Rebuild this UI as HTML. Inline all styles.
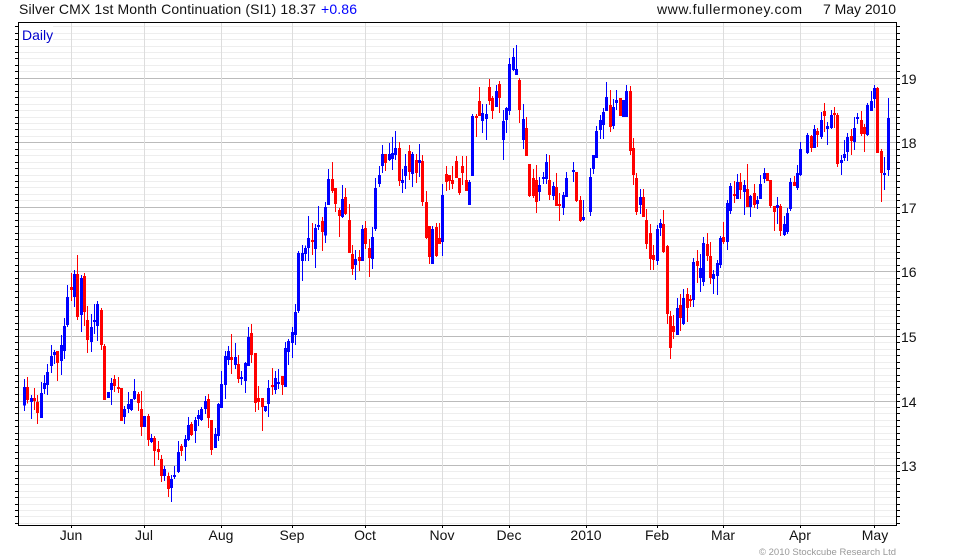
<!DOCTYPE html>
<html>
<head>
<meta charset="utf-8">
<title>Silver CMX</title>
<style>
html,body{margin:0;padding:0;background:#fff;width:980px;height:560px;overflow:hidden}
svg{display:block}
text{font-family:"Liberation Sans",Arial,sans-serif;font-size:14px;fill:#111}
.m{text-anchor:middle}
</style>
</head>
<body>
<svg width="980" height="560" viewBox="0 0 980 560" xmlns="http://www.w3.org/2000/svg">
<defs>
<path id="m" d="M0 26.5H1M0 33.5H1M0 39.5H1M0 46.5H1M0 52.5H1M0 58.5H1M0 65.5H1M0 71.5H1M0 78.5H1M0 84.5H1M0 91.5H1M0 97.5H1M0 104.5H1M0 110.5H1M0 117.5H1M0 123.5H1M0 129.5H1M0 136.5H1M0 142.5H1M0 149.5H1M0 155.5H1M0 162.5H1M0 168.5H1M0 175.5H1M0 181.5H1M0 187.5H1M0 194.5H1M0 200.5H1M0 207.5H1M0 213.5H1M0 220.5H1M0 226.5H1M0 233.5H1M0 239.5H1M0 246.5H1M0 252.5H1M0 258.5H1M0 265.5H1M0 271.5H1M0 278.5H1M0 284.5H1M0 291.5H1M0 297.5H1M0 304.5H1M0 310.5H1M0 316.5H1M0 323.5H1M0 329.5H1M0 336.5H1M0 342.5H1M0 349.5H1M0 355.5H1M0 362.5H1M0 368.5H1M0 375.5H1M0 381.5H1M0 387.5H1M0 394.5H1M0 401.5H1M0 407.5H1M0 413.5H1M0 420.5H1M0 426.5H1M0 433.5H1M0 439.5H1M0 445.5H1M0 452.5H1M0 458.5H1M0 465.5H1M0 471.5H1M0 478.5H1M0 484.5H1M0 491.5H1M0 497.5H1M0 504.5H1M0 510.5H1M0 516.5H1M0 523.5H1"/>
</defs>
<g shape-rendering="crispEdges" fill="none">
<use href="#m" transform="translate(19 0) scale(877 1)" stroke="#eeeeee" stroke-width="1"/>
<path stroke="#bbbbbb" d="M19 78.5H896M19 142.5H896M19 207.5H896M19 271.5H896M19 336.5H896M19 401.5H896M19 465.5H896"/>
<path stroke="#dddddd" d="M71.5 23V525M144.5 23V525M221.5 23V525M292.5 23V525M365.5 23V525M442.5 23V525M509.5 23V525M586.5 23V525M657.5 23V525M723.5 23V525M800.5 23V525M874.5 23V525"/>
<rect x="19" y="23" width="34" height="20" fill="#fff"/>

<g transform="translate(0 240) scale(.33333)">
<path stroke="#0000ff" stroke-width="3.02" d="M73 417V513M94 465V537M124 426V534M133 405V462M142 372V465M154 315V399M163 330V372M184 285V405M193 234V357M202 135V261M223 90V201M244 105V276M274 222V336M283 192V282M292 183V303M325 456V474M334 414V495M373 498V552M385 456V519M394 477V513M403 417V480M433 528V561M454 582V609M493 678V723M514 705V786M523 678V717M535 603V699M556 585V663M565 531V603M586 531V609M595 510V558M604 501V543M616 468V522M646 564V624M655 489V603M664 393V504M676 333V477M685 318V375M706 309V387M724 393V435M736 366V459M745 261V378M796 498V516M805 420V531M826 393V462M835 387V447M856 306V441M865 297V375M877 261V354M886 192V315M895 33V219M907 15V123M916 17V63M925 -72V63M946 -48V84M955 -102V-30"/>
<path stroke="#ff0000" stroke-width="3.02" d="M82 411V490M103 444V510M112 465V552M172 333V423M214 99V183M232 45V240M253 99V258M262 198V339M304 204V330M313 312V480M343 405V456M355 411V459M364 444V543M415 456V513M424 453V588M445 522V618M463 588V678M475 603V660M484 645V726M505 697V771M544 612V648M574 546V588M625 462V564M634 540V645M694 282V402M715 345V429M754 252V369M766 339V516M775 438V510M787 474V573M817 384V465M847 408V465M937 -51V45M967 -69V33"/>
<path stroke="#0000ff" stroke-width="9" d="M73 441V497M94 474V486M124 459V534M133 429V447M142 396V435M154 348V378M163 336V345M184 315V363M193 258V333M202 171V255M223 102V171M244 114V225M274 261V306M283 240V246M292 192V258M325 456V474M334 429V450M373 507V531M385 492V507M394 477V510M403 453V477M433 528V561M454 594V606M493 687V708M514 717V744M523 705V711M535 636V696M556 597V621M565 555V600M586 540V573M595 525V537M604 507V540M616 483V507M646 582V624M655 492V588M664 432V504M676 348V435M685 333V360M706 351V375M724 411V417M736 369V423M745 291V378M796 498V513M805 444V492M826 414V450M835 426V432M856 324V441M865 303V336M877 276V309M886 216V285M895 39V213M907 39V63M916 24V42M925 -6V24M946 -36V27M955 -45V-39"/>
<path stroke="#ff0000" stroke-width="9" d="M82 441V480M103 474V483M112 486V519M172 333V369M214 141V150M232 102V231M253 108V216M262 240V300M304 210V315M313 318V480M343 417V438M355 441V447M364 444V543M415 462V489M424 507V561M445 528V600M463 594V633M475 627V636M484 657V708M505 708V747M544 618V633M574 552V585M625 477V534M634 540V630M694 351V360M715 372V417M754 279V345M766 339V489M775 474V486M787 474V501M817 435V441M847 408V435M937 0V6M967 -57V-24"/>
</g>

<g transform="translate(320 30) scale(.33333)">
<path stroke="#0000ff" stroke-width="3.02" d="M16 516V639M25 417V525M67 465V564M106 660V750M127 585V693M157 591V717M166 444V603M178 408V471M187 345V429M208 339V393M217 321V420M226 303V390M247 417V489M256 372V477M277 366V471M298 342V441M337 588V702M367 462V678M448 450V525M457 252V438M487 222V309M499 222V330M529 165V231M550 240V390M559 231V309M568 84V255M580 54V123M589 45V135M610 222V357M658 441V513M670 426V462M679 372V462M700 456V510M730 486V555M739 426V501M760 396V456M790 510V573M811 414V558M820 375V432M829 288V384M841 255V327M850 234V327M859 156V243M880 207V297M889 180V240M910 210V261M919 165V261M961 477V552M1012 585V705"/>
<path stroke="#ff0000" stroke-width="3.02" d="M37 396V489M46 474V546M58 534V621M76 474V555M88 522V669M97 645V735M118 660V723M136 573V657M148 627V741M196 372V423M238 336V468M268 345V450M289 372V459M307 375V528M319 483V627M328 588V702M349 579V681M358 579V642M379 408V483M388 435V480M397 408V477M409 378V444M418 444V495M427 378V465M439 378V483M469 252V321M478 171V258M508 147V225M517 198V267M538 153V249M598 144V279M619 261V378M628 402V501M640 417V504M649 405V549M688 375V510M709 429V528M718 489V573M769 426V516M781 498V576M871 180V306M901 204V258M931 168V375M940 324V465M949 429V555M970 477V561M979 537V657M991 582V720M1000 645V720"/>
<path stroke="#0000ff" stroke-width="9" d="M16 531V617M25 447V525M67 507V561M106 687V705M127 597V693M157 621V687M166 474V597M178 435V462M187 372V408M208 372V390M217 369V387M226 354V375M247 450V459M256 408V438M277 372V432M298 390V399M337 597V702M367 495V636M448 456V525M457 258V438M487 249V273M499 252V267M529 183V231M550 273V330M559 234V270M568 102V243M580 81V120M589 117V135M610 267V330M658 465V486M670 441V447M679 396V447M700 468V498M730 495V534M739 444V501M760 420V426M790 561V570M811 441V546M820 375V417M829 303V384M841 270V300M850 246V285M859 201V243M880 231V288M889 210V219M910 210V261M919 183V261M961 501V525M1012 597V693"/>
<path stroke="#ff0000" stroke-width="9" d="M37 447V483M46 474V522M58 540V558M76 501V552M88 570V669M97 672V717M118 681V693M136 594V642M148 654V684M196 372V399M238 354V453M268 363V426M289 390V429M307 393V516M319 516V624M328 588V681M349 591V678M358 624V642M379 432V456M388 435V453M397 450V462M409 393V444M418 444V489M427 408V429M439 450V483M469 258V264M478 213V258M508 171V213M517 204V243M538 162V204M598 150V240M619 294V378M628 402V498M640 444V498M649 450V516M688 450V495M709 471V528M718 522V528M769 426V513M781 510V573M871 225V291M901 204V258M931 183V363M940 354V435M949 444V546M970 501V561M979 570V642M991 609V687M1000 675V690"/>
</g>

<g transform="translate(620 70) scale(.33333)">
<path stroke="#0000ff" stroke-width="3.02" d="M121 447V498M172 684V795M190 657V765M220 564V711M241 552V666M250 501V648M280 600V672M292 570V675M301 498V594M322 390V540M331 339V432M352 312V387M373 330V435M391 375V441M412 378V417M421 315V387M433 294V339M472 381V462M493 438V498M502 414V492M511 324V423M532 285V360M541 216V318M563 189V252M583 165V234M604 126V207M622 156V225M634 120V177M664 255V315M673 210V273M682 189V273M703 141V240M712 129V162M742 99V198M754 63V123M763 45V114M793 261V360M805 84V318"/>
<path stroke="#ff0000" stroke-width="3.02" d="M130 420V549M142 525V762M151 723V867M160 735V807M181 672V783M202 654V756M211 675V711M232 540V639M262 489V573M271 516V642M310 456V522M343 333V399M361 309V387M382 282V411M403 342V414M442 309V333M451 330V414M463 408V483M481 402V498M523 318V348M574 195V246M592 174V231M613 99V186M643 111V174M652 129V291M694 177V255M724 123V198M733 162V246M772 51V249M784 237V396"/>
<path stroke="#0000ff" stroke-width="9" d="M121 459V474M172 714V795M190 684V762M220 576V690M241 594V624M250 519V636M280 612V627M292 579V618M301 504V585M322 399V516M331 348V423M352 336V387M373 345V366M391 378V411M412 390V402M421 342V387M433 309V327M472 405V414M493 462V495M502 429V486M511 336V417M532 309V354M541 237V315M563 195V249M583 177V234M604 150V201M622 168V177M634 135V174M664 270V279M673 252V264M682 201V246M703 174V216M712 141V147M742 105V195M754 93V123M763 54V87M793 309V315M805 144V300"/>
<path stroke="#ff0000" stroke-width="9" d="M130 462V546M142 528V732M151 738V834M160 768V786M181 705V744M202 672V714M211 687V693M232 573V588M262 522V558M271 558V624M310 501V516M343 372V378M361 336V360M382 357V411M403 369V405M442 309V333M451 330V408M463 408V426M481 408V483M523 336V348M574 198V234M592 183V195M613 123V138M643 129V135M652 135V282M694 198V213M724 150V192M733 171V192M772 54V249M784 243V309"/>
</g>

<use href="#m" transform="translate(15 0) scale(3 1)" stroke="#000" stroke-width="1"/>
<use href="#m" transform="translate(897 0) scale(3 1)" stroke="#000" stroke-width="1"/>
<path stroke="#000" d="M71.5 525V528M144.5 525V528M221.5 525V528M292.5 525V528M365.5 525V528M442.5 525V528M509.5 525V528M586.5 525V528M657.5 525V528M723.5 525V528M800.5 525V528M874.5 525V528"/>
<rect x="18.5" y="22.5" width="878" height="503" stroke="#000" stroke-width="1"/>
</g>

<text x="19" y="14" textLength="297" lengthAdjust="spacing">Silver CMX 1st Month Continuation (SI1) 18.37</text>
<text x="321" y="14" textLength="36" lengthAdjust="spacing" style="fill:#0000ff">+0.86</text>
<text x="657" y="14" textLength="145" lengthAdjust="spacing">www.fullermoney.com</text>
<text x="823" y="14" textLength="73" lengthAdjust="spacing">7 May 2010</text>
<text x="22" y="40" style="fill:#0000cc">Daily</text>

<text x="901" y="84">19</text>
<text x="901" y="148">18</text>
<text x="901" y="213">17</text>
<text x="901" y="277">16</text>
<text x="901" y="342">15</text>
<text x="901" y="407">14</text>
<text x="901" y="471">13</text>

<text class="m" x="71" y="540">Jun</text>
<text class="m" x="144" y="540">Jul</text>
<text class="m" x="221" y="540">Aug</text>
<text class="m" x="292" y="540">Sep</text>
<text class="m" x="365" y="540">Oct</text>
<text class="m" x="442" y="540">Nov</text>
<text class="m" x="509" y="540">Dec</text>
<text class="m" x="586" y="540">2010</text>
<text class="m" x="657" y="540">Feb</text>
<text class="m" x="723" y="540">Mar</text>
<text class="m" x="800" y="540">Apr</text>
<text class="m" x="875" y="540">May</text>

<text x="759" y="555" textLength="137" lengthAdjust="spacing" style="font-size:9.5px;fill:#999">© 2010 Stockcube Research Ltd</text>
</svg>
</body>
</html>
